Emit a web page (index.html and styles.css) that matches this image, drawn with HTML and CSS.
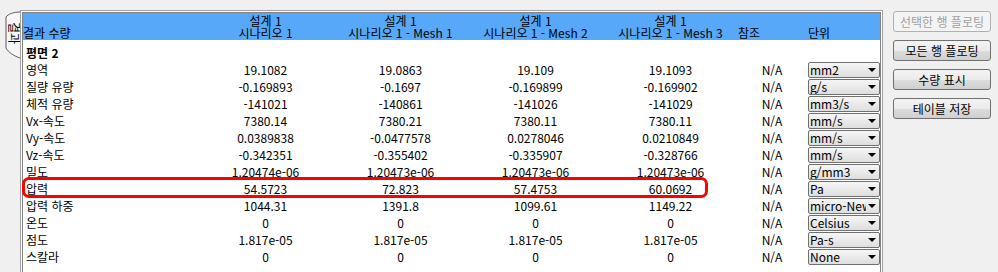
FILE: index.html
```html
<!DOCTYPE html>
<html lang="ko">
<head>
<meta charset="utf-8">
<link rel="stylesheet" href="styles.css">
</head>
<body>
<div class="app">
  <div class="tab">
    <svg width="17" height="52" viewBox="0 0 17 52">
      <defs>
        <clipPath id="tabclip"><path d="M16 2 C10 2 4 4 2 7 L2 38 C4 42 10 46 16 48 Z"/></clipPath>
      </defs>
      <path d="M16 2 C10 2 4 4 2 7 L2 38 C4 42 10 46 16 48 L16 2 Z" fill="#f7f7f7"/>
      <path d="M16 2 C10 2 4 4 2 7 L2 38 C4 42 10 46 16 48" fill="none" stroke="#5a5a5a" stroke-width="1"/>
      <g clip-path="url(#tabclip)">
        <text class="tabtext" transform="translate(5 12) rotate(90)">결과</text>
      </g>
    </svg>
  </div>
  <div class="panel">
    <div class="inner">
      <div class="head">
        <div class="hc left"><span class="l1">&nbsp;</span><span>결과 수량</span></div>
        <div class="hc"><span class="l1">설계 1</span><span>시나리오 1</span></div>
        <div class="hc"><span class="l1">설계 1</span><span>시나리오 1 - Mesh 1</span></div>
        <div class="hc"><span class="l1">설계 1</span><span>시나리오 1 - Mesh 2</span></div>
        <div class="hc"><span class="l1">설계 1</span><span>시나리오 1 - Mesh 3</span></div>
        <div class="hc left"><span class="l1">&nbsp;</span><span>참조</span></div>
        <div class="hc left unit"><span class="l1">&nbsp;</span><span>단위</span></div>
      </div>
      <div class="body">
        <div class="row group"><div class="lbl">평면 2</div></div>
        <div class="row"><div class="lbl">영역</div><div class="v">19.1082</div><div class="v">19.0863</div><div class="v">19.109</div><div class="v">19.1093</div><div class="v">N/A</div><div class="u"><div class="sel"><span>mm2</span><i></i></div></div></div>
        <div class="row"><div class="lbl">질량 유량</div><div class="v">-0.169893</div><div class="v">-0.1697</div><div class="v">-0.169899</div><div class="v">-0.169902</div><div class="v">N/A</div><div class="u"><div class="sel"><span>g/s</span><i></i></div></div></div>
        <div class="row"><div class="lbl">체적 유량</div><div class="v">-141021</div><div class="v">-140861</div><div class="v">-141026</div><div class="v">-141029</div><div class="v">N/A</div><div class="u"><div class="sel"><span>mm3/s</span><i></i></div></div></div>
        <div class="row"><div class="lbl">Vx-속도</div><div class="v">7380.14</div><div class="v">7380.21</div><div class="v">7380.11</div><div class="v">7380.11</div><div class="v">N/A</div><div class="u"><div class="sel"><span>mm/s</span><i></i></div></div></div>
        <div class="row"><div class="lbl">Vy-속도</div><div class="v">0.0389838</div><div class="v">-0.0477578</div><div class="v">0.0278046</div><div class="v">0.0210849</div><div class="v">N/A</div><div class="u"><div class="sel"><span>mm/s</span><i></i></div></div></div>
        <div class="row"><div class="lbl">Vz-속도</div><div class="v">-0.342351</div><div class="v">-0.355402</div><div class="v">-0.335907</div><div class="v">-0.328766</div><div class="v">N/A</div><div class="u"><div class="sel"><span>mm/s</span><i></i></div></div></div>
        <div class="row"><div class="lbl">밀도</div><div class="v">1.20474e-06</div><div class="v">1.20473e-06</div><div class="v">1.20473e-06</div><div class="v">1.20473e-06</div><div class="v">N/A</div><div class="u"><div class="sel"><span>g/mm3</span><i></i></div></div></div>
        <div class="row hl"><div class="lbl">압력</div><div class="v">54.5723</div><div class="v">72.823</div><div class="v">57.4753</div><div class="v">60.0692</div><div class="v">N/A</div><div class="u"><div class="sel"><span>Pa</span><i></i></div></div></div>
        <div class="row"><div class="lbl">압력 하중</div><div class="v">1044.31</div><div class="v">1391.8</div><div class="v">1099.61</div><div class="v">1149.22</div><div class="v">N/A</div><div class="u"><div class="sel"><span>micro-Newton</span><i></i></div></div></div>
        <div class="row"><div class="lbl">온도</div><div class="v">0</div><div class="v">0</div><div class="v">0</div><div class="v">0</div><div class="v">N/A</div><div class="u"><div class="sel"><span>Celsius</span><i></i></div></div></div>
        <div class="row"><div class="lbl">점도</div><div class="v">1.817e-05</div><div class="v">1.817e-05</div><div class="v">1.817e-05</div><div class="v">1.817e-05</div><div class="v">N/A</div><div class="u"><div class="sel"><span>Pa-s</span><i></i></div></div></div>
        <div class="row"><div class="lbl">스칼라</div><div class="v">0</div><div class="v">0</div><div class="v">0</div><div class="v">0</div><div class="v">N/A</div><div class="u"><div class="sel"><span>None</span><i></i></div></div></div>
      </div>
    </div>
  </div>
  <div class="buttons">
    <button class="btn" disabled>선택한 행 플로팅</button>
    <button class="btn">모든 행 플로팅</button>
    <button class="btn">수량 표시</button>
    <button class="btn">테이블 저장</button>
  </div>
</div>
</body>
</html>
```

FILE: styles.css
```css
html, body {
  margin: 0;
  padding: 0;
  background: #f0f0f0;
  overflow: hidden;
}
body {
  font-family: "Noto Sans CJK KR", "Noto Sans", sans-serif;
  font-size: 12px;
  color: #000;
  width: 998px;
  height: 272px;
}
.app {
  display: flex;
  align-items: flex-start;
  padding: 10px 0 0 4px;
  height: 262px;
}
.tab {
  width: 17px;
  height: 52px;
  flex: none;
  position: relative;
  z-index: 1;
}
.tab svg { display: block; }
.tabtext {
  font-family: "Noto Sans CJK KR", sans-serif;
  font-size: 12px;
  fill: #000;
}
.panel {
  margin-left: -1px;
  border: 1px solid #a0a0a0;
  padding: 1px;
  background: #ffffff;
  height: 280px;
  flex: none;
}
.inner {
  border: 1px solid #828282;
  width: 857px;
  height: 290px;
  background: #fff;
}
.head {
  display: grid;
  grid-template-columns: 175px repeat(4, 135px) 68px 74px;
  height: 27px;
  background: #57a8f8;
}
.hc {
  display: flex;
  flex-direction: column;
  align-items: center;
  padding-top: 2px;
  line-height: 12px;
  white-space: nowrap;
}
.hc.left { align-items: flex-start; }
.hc.unit { padding-left: 2px; }
.body {
  padding-top: 4px;
}
.row {
  display: grid;
  grid-template-columns: 175px repeat(4, 135px) 68px 74px;
  height: 17px;
  align-items: center;
  line-height: 17px;
  white-space: nowrap;
  position: relative;
}
.row.group .lbl { font-weight: bold; }
.lbl { padding-left: 3px; }
.v { text-align: center; }
.u { padding-left: 2px; height: 17px; }
.sel {
  margin-top: 1px;
  box-sizing: border-box;
  width: 72px;
  height: 16px;
  border: 1px solid #707070;
  border-radius: 2px;
  background: linear-gradient(#f6f6f6, #dedede);
  display: flex;
  align-items: center;
  padding-left: 1px;
  padding-right: 3px;
  line-height: 14px;
}
.sel span {
  flex: 1;
  overflow: hidden;
  white-space: nowrap;
}
.sel i {
  flex: none;
  width: 0;
  height: 0;
  margin-left: 2px;
  border-left: 4px solid transparent;
  border-right: 4px solid transparent;
  border-top: 4px solid #000;
}
.row.hl::after {
  content: "";
  position: absolute;
  left: -1px;
  top: -3px;
  width: 686px;
  height: 21px;
  box-sizing: border-box;
  border: 3px solid #ff0000;
  border-radius: 7px;
  pointer-events: none;
}
.buttons {
  display: flex;
  flex-direction: column;
  gap: 8px;
  margin-left: 10px;
  margin-top: 1px;
}
.btn {
  width: 98px;
  height: 21px;
  box-sizing: border-box;
  border: 1px solid #707070;
  border-radius: 3px;
  background: linear-gradient(#f3f3f3 0%, #ebebeb 50%, #dddddd 51%, #cfcfcf 100%);
  font-family: "Noto Sans CJK KR", sans-serif;
  font-size: 12px;
  line-height: 17px;
  padding: 0;
  color: #000;
  white-space: nowrap;
}
.btn:disabled {
  border-color: #adb2b5;
  background: #f4f4f4;
  color: #a0a0a0;
}
```
